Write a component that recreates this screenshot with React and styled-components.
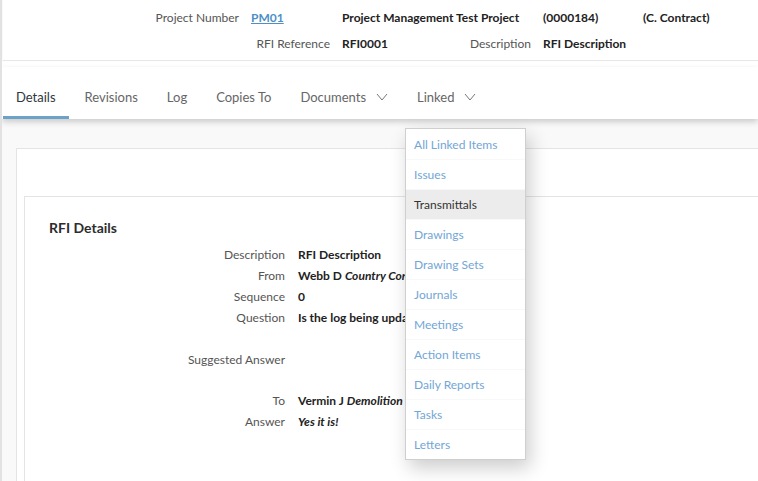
import React from "react";
import styled, { createGlobalStyle } from "styled-components";

const GlobalStyle = createGlobalStyle`
  html, body {
    margin: 0;
    padding: 0;
    background: #ffffff;
    font-family: Lato, "Open Sans", sans-serif;
    font-size: 12px;
  }
`

const Page = styled.div`
  position: relative;
  width: 758px;
  height: 481px;
  overflow: hidden;
  box-sizing: border-box;
  border-left: 2px solid #e2e2e2;
  display: flex;
  flex-direction: column;
  background: #f9f9f9;
`

const ScrollThumb = styled.div`
  position: absolute;
  left: -2px;
  top: 409px;
  width: 2px;
  height: 50px;
  background: #c2c2c2;
`

const Header = styled.div`
  background: #fff;
  height: 52px;
  border-bottom: 1px solid #e6e6e6;
  margin-left: 1px;
  padding: 8px 0 0 141px;
  box-sizing: content-box;
`

const HeaderGrid = styled.div`
  display: grid;
  grid-template-columns: 95px 79px 58px 119px 88px auto;
  column-gap: 12px;
  row-gap: 7px;
  line-height: 19px;
  color: #444;
`

const HLabel = styled.div`
  text-align: right;
  color: #555;
  white-space: nowrap;
  grid-column: ${p => p.$span || "auto"};
`

const HValue = styled.div`
  font-weight: 700;
  color: #222;
  white-space: nowrap;
  grid-column: ${p => p.$span || "auto"};
`

const HLink = styled.a`
  color: #4d8fc6;
  font-weight: 700;
  text-decoration: underline;
`

const Gap = styled.div`
  height: 6px;
  background: #fff;
`

const TabBar = styled.div`
  position: relative;
  z-index: 2;
  display: flex;
  height: 52px;
  padding-left: 1px;
  gap: 3px;
  background: #fff;
  box-shadow: 0 3px 6px rgba(0, 0, 0, 0.18);
`

const Tab = styled.div`
  position: relative;
  display: flex;
  align-items: center;
  gap: 10px;
  padding: 10px 13px 0;
  color: ${p => (p.$active ? "#2f3640" : "#666")};
  border-bottom: 3px solid ${p => (p.$active ? "#6aa2c8" : "transparent")};
  font-size: 13px;
`

const Chevron = () => (
  <svg width="12" height="8" viewBox="0 0 12 8">
    <path d="M1 1 L6 7 L11 1" fill="none" stroke="#777" strokeWidth="1" />
  </svg>
)

const Menu = styled.ul`
  position: absolute;
  top: 61px;
  left: 1px;
  width: 119px;
  margin: 0;
  padding: 0;
  list-style: none;
  background: #fff;
  border: 1px solid #cfcfcf;
  box-shadow: 4px 8px 18px rgba(0, 0, 0, 0.2);
  z-index: 5;
  font-size: 12px;
`

const MenuItem = styled.li`
  height: 30px;
  line-height: 30px;
  padding-left: 8px;
  box-sizing: border-box;
  border-top: 1px solid ${p => (p.$first ? "transparent" : "#f8f8f8")};
  color: ${p => (p.$hover ? "#333" : "#72a6d6")};
  background: ${p => (p.$hover ? "#ececec" : "#fff")};
  white-space: nowrap;
`

const Content = styled.div`
  flex: 1;
  padding: 29px 0 0 14px;
`

const OuterPanel = styled.div`
  height: 100%;
  background: #fff;
  border: 1px solid #e4e4e4;
  border-right: none;
  border-bottom: none;
  padding: 47px 0 0 7px;
  box-sizing: border-box;
`

const InnerPanel = styled.div`
  height: 100%;
  border: 1px solid #e4e4e4;
  border-right: none;
  border-bottom: none;
  padding: 20px 0 0 24px;
  box-sizing: border-box;
`

const Title = styled.h3`
  margin: 0 0 6px;
  font-size: 14px;
  font-weight: 700;
  color: #2d2d2d;
  line-height: 21px;
`

const Details = styled.div`
  display: grid;
  grid-template-columns: 236px auto;
  column-gap: 13px;
`

const Row = styled.div`
  display: contents;
`

const DLabel = styled.div`
  text-align: right;
  color: #555;
  line-height: 21px;
  height: ${p => p.$h || 21}px;
`

const DValue = styled.div`
  font-weight: 700;
  color: #222;
  line-height: 21px;
  white-space: nowrap;
  font-style: ${p => (p.$italic ? "italic" : "normal")};
  i {
    font-weight: 700;
  }
`

const links = [
  "All Linked Items",
  "Issues",
  "Transmittals",
  "Drawings",
  "Drawing Sets",
  "Journals",
  "Meetings",
  "Action Items",
  "Daily Reports",
  "Tasks",
  "Letters",
]

const rows = [
  { label: "Description", value: "RFI Description" },
  { label: "From", value: <>Webb D <i>Country Contractors</i></> },
  { label: "Sequence", value: "0" },
  { label: "Question", value: "Is the log being updated?", h: 42 },
  { label: "Suggested Answer", value: "", h: 41 },
  { label: "To", value: <>Vermin J <i>Demolition Ltd</i></> },
  { label: "Answer", value: "Yes it is!", italic: true },
]

export default function App() {
  return (
    <>
      <GlobalStyle />
      <Page>
        <ScrollThumb />
        <Header>
          <HeaderGrid>
            <HLabel>Project Number</HLabel>
            <HValue><HLink>PM01</HLink></HValue>
            <HValue $span="3 / span 2">Project Management Test Project</HValue>
            <HValue>(0000184)</HValue>
            <HValue>(C. Contract)</HValue>
            <HLabel $span="1 / span 2">RFI Reference</HLabel>
            <HValue>RFI0001</HValue>
            <HLabel>Description</HLabel>
            <HValue>RFI Description</HValue>
          </HeaderGrid>
        </Header>
        <Gap />
        <TabBar>
          <Tab $active>Details</Tab>
          <Tab>Revisions</Tab>
          <Tab>Log</Tab>
          <Tab>Copies To</Tab>
          <Tab>Documents <Chevron /></Tab>
          <Tab>
            Linked <Chevron />
            <Menu>
              {links.map((l, i) => (
                <MenuItem key={l} $first={i === 0} $hover={l === "Transmittals"}>{l}</MenuItem>
              ))}
            </Menu>
          </Tab>
        </TabBar>
        <Content>
          <OuterPanel>
            <InnerPanel>
              <Title>RFI Details</Title>
              <Details>
                {rows.map(r => (
                  <Row key={r.label}>
                    <DLabel $h={r.h}>{r.label}</DLabel>
                    <DValue $italic={r.italic}>{r.value}</DValue>
                  </Row>
                ))}
              </Details>
            </InnerPanel>
          </OuterPanel>
        </Content>
      </Page>
    </>
  );
}
